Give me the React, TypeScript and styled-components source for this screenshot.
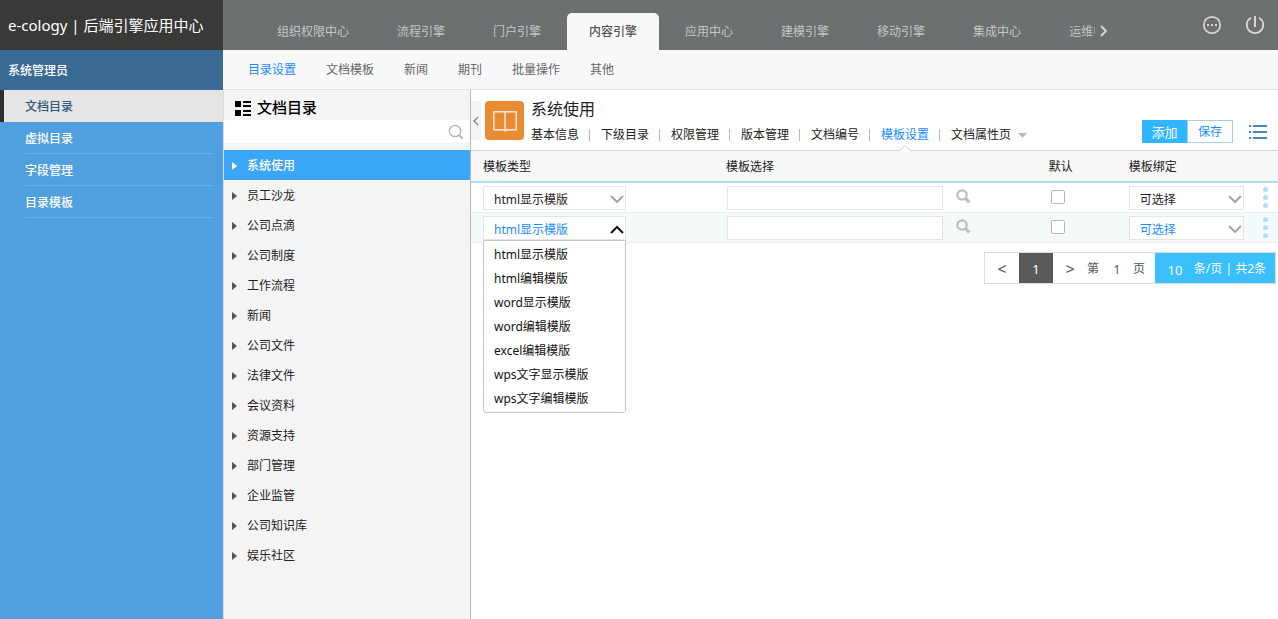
import React from 'react';
import styled, { createGlobalStyle, css } from 'styled-components';

const GlobalStyle = createGlobalStyle`
  * { box-sizing: border-box; }
  body {
    margin: 0;
    background: #fff;
    color: #222;
    font: 12px/18px "Noto Sans", "Noto Sans CJK SC", sans-serif;
  }
  ul { list-style: none; margin: 0; padding: 0; }
  a { color: inherit; text-decoration: none; }
  button, input, select { font: inherit; color: inherit; margin: 0; padding: 0; border-radius: 0; }
  button { border: 0; background: none; cursor: pointer; }
`;

/* ---------- frame ---------- */

const Page = styled.div`
  min-height: 100vh;
  display: flex;
  flex-direction: column;
`;

const TopBar = styled.header`
  display: flex;
  height: 50px;
  background: #6c7070;
`;

const Brand = styled.div`
  flex: 0 0 223px;
  padding-left: 8px;
  background: #393937;
  color: #fff;
  font-size: 15px;
  line-height: 50px;
  white-space: nowrap;
`;

const EngineNav = styled.nav`
  flex: 1 1 0;
  min-width: 0;
  display: flex;
  gap: 4px;
  padding: 13px 0 0 2px;
  margin-left: 30px;
  overflow: hidden;
`;

const EngineTab = styled.a<{ $active?: boolean }>`
  flex: none;
  padding: 0 22px;
  line-height: 37px;
  color: #c4c6c6;
  border-radius: 5px 5px 0 0;
  ${(p) => p.$active && css`
    background: #f8f8f8;
    color: #555;
    font-weight: 500;
  `}
`;

const TopTools = styled.div`
  flex: 0 0 183px;
  display: flex;
  align-items: center;
  padding-right: 13px;
  color: #d4d5d5;
`;

const ToolButton = styled.button<{ $push?: boolean }>`
  display: flex;
  padding: 0;
  margin-left: ${(p) => (p.$push ? 'auto' : '23px')};
`;

const MoreTabs = styled.button`
  display: flex;
  padding: 12px 0 0 5px;
`;

const Body = styled.div`
  flex: 1;
  display: flex;
`;

/* ---------- left menu ---------- */

const Sidebar = styled.aside`
  flex: 0 0 223px;
  background: #50a0df;
  color: #fff;
`;

const UserName = styled.div`
  height: 40px;
  padding: 1px 0 0 8px;
  background: #396a95;
  line-height: 40px;
  font-weight: 500;
`;

const MenuLink = styled.a<{ $active?: boolean }>`
  display: block;
  height: 32px;
  line-height: 33px;
  margin: 0 10px 0 25px;
  border-bottom: 1px solid #64afe9;
  font-weight: 500;
  ${(p) => p.$active && css`
    margin: 0;
    padding-left: 21px;
    border-bottom: 0;
    background: linear-gradient(to right, #2f2f2c 4px, #e5e5e5 4px);
    color: #30597f;
    padding-left: 25px;
  `}
`;

/* ---------- content frame ---------- */

const Content = styled.div`
  flex: 1;
  min-width: 0;
  display: flex;
  flex-direction: column;
`;

const SubNav = styled.nav`
  display: flex;
  gap: 30px;
  height: 40px;
  padding-left: 25px;
  border-bottom: 1px solid #e2e2e2;
  background: #f8f8f8;
  line-height: 40px;
`;

const SubLink = styled.a<{ $active?: boolean }>`
  color: ${(p) => (p.$active ? '#1a8cff' : '#666')};
`;

const Split = styled.div`
  flex: 1;
  display: flex;
`;

/* ---------- directory tree ---------- */

const TreePanel = styled.section`
  flex: 0 0 248px;
  border-left: 1px solid #dcdcdc;
  border-right: 1px solid #b9b9b9;
  background: #f4f4f4;
`;

const TreeTitle = styled.h2`
  display: flex;
  align-items: center;
  gap: 6px;
  height: 30px;
  margin: 0;
  padding: 4px 0 0 11px;
  color: #000;
  font-size: 15px;
  line-height: 20px;
  font-weight: 500;
  svg { margin-top: 4px; }
`;

const TreeSearch = styled.label`
  display: flex;
  align-items: center;
  height: 23px;
  margin-bottom: 7px;
  padding-right: 6px;
  background: #fff;
  input {
    flex: 1;
    min-width: 0;
    height: 23px;
    padding-left: 11px;
    border: 0;
    outline: 0;
    background: none;
  }
`;

const TreeItem = styled.button<{ $active?: boolean }>`
  display: flex;
  align-items: center;
  gap: 10px;
  width: 100%;
  height: 30px;
  padding: 2px 0 0 8px;
  color: ${(p) => (p.$active ? '#fff' : '#222')};
  background: ${(p) => (p.$active ? '#3ba5f7' : 'none')};
  font-weight: ${(p) => (p.$active ? 500 : 400)};
  svg { fill: ${(p) => (p.$active ? '#fff' : '#555')}; }
`;

/* ---------- main ---------- */

const Main = styled.main`
  flex: 1;
  min-width: 0;
`;

const MainHead = styled.div`
  display: flex;
  align-items: flex-start;
  height: 61px;
  padding: 11px 11px 0 0;
  border-bottom: 1px solid #d6d6d6;
`;

const Collapse = styled.button`
  display: flex;
  align-items: center;
  justify-content: center;
  width: 10px;
  height: 39px;
  margin-right: 4px;
  background: #f4f4f4;
`;

const BookBadge = styled.div`
  display: flex;
  align-items: center;
  justify-content: center;
  width: 39px;
  height: 39px;
  margin-right: 7px;
  border-radius: 4px;
  background: #e88b33;
`;

const HeadText = styled.div`
  flex: 1;
  min-width: 0;
`;

const MainTitle = styled.h1`
  margin: 0;
  color: #222;
  font-size: 16px;
  line-height: 16px;
  font-weight: 400;
`;

const DetailTabs = styled.nav`
  display: flex;
  padding-top: 9px;
  white-space: nowrap;
`;

const DetailTab = styled.a<{ $active?: boolean }>`
  position: relative;
  display: flex;
  align-items: center;
  height: 18px;
  color: ${(p) => (p.$active ? '#1a8cff' : '#222')};
  &:not(:first-child)::before {
    content: '';
    width: 1px;
    height: 12px;
    margin: 0 11px 0 10px;
    background: #b4b8c4;
  }
`;

const Notch = styled.svg`
  position: absolute;
  right: 18px;
  top: 19px;
`;

const Actions = styled.div`
  display: flex;
  align-items: center;
  padding-top: 19px;
`;

const ActionButton = styled.button<{ $primary?: boolean }>`
  width: ${(p) => (p.$primary ? '45px' : '46px')};
  height: 23px;
  border: 1px solid ${(p) => (p.$primary ? '#30b5ff' : '#a9cbee')};
  background: ${(p) => (p.$primary ? '#30b5ff' : '#fff')};
  color: ${(p) => (p.$primary ? '#fff' : '#1a8cff')};
  font-size: ${(p) => (p.$primary ? '13px' : '12px')};
  line-height: 22px;
`;

const ListButton = styled.button`
  display: flex;
  margin-left: 16px;
`;

/* ---------- table ---------- */

const Grid = styled.table`
  width: 100%;
  table-layout: fixed;
  border-collapse: separate;
  border-spacing: 0;
  th {
    height: 32px;
    padding: 2px 0 0 12px;
    border-bottom: 2px solid #b3dcfb;
    background: #f7f7f7;
    color: #222;
    font-weight: 400;
    text-align: left;
  }
  td {
    height: 30px;
    padding: 3px 0 2px 12px;
    border-bottom: 1px solid #eeefef;
    vertical-align: top;
  }
  td:last-child { padding-left: 0; }
  tbody tr:nth-child(even) td { background: #f3faf9; }
`;

const Picker = styled.div<{ $width: number; $on?: boolean }>`
  position: relative;
  width: ${(p) => p.$width}px;
  height: 24px;
  color: ${(p) => (p.$on ? '#1a8cff' : '#222')};
  select {
    display: block;
    width: 100%;
    height: 24px;
    padding: 4px 24px 0 10px;
    border: 1px solid #e6e6de;
    background: #fff;
    appearance: none;
    outline: 0;
  }
  > svg { position: absolute; right: 2px; top: 9px; pointer-events: none; }
`;

const Options = styled.ul`
  position: absolute;
  z-index: 2;
  top: 24px;
  left: 0;
  right: 0;
  padding: 2px 0 1px;
  border: 1px solid #c8c8c8;
  border-radius: 0 0 3px 3px;
  background: #fff;
  color: #111;
`;

const Option = styled.li`
  padding-left: 10px;
  line-height: 24px;
`;

const Browse = styled.div`
  display: flex;
  align-items: flex-start;
  gap: 13px;
  margin-left: 1px;
  input {
    width: 216px;
    height: 24px;
    padding: 0 6px;
    border: 1px solid #e6e6de;
    background: #fff;
    outline: 0;
  }
  button { padding-top: 3px; }
  svg { display: block; }
`;

const Tick = styled.input`
  display: block;
  width: 14px;
  height: 14px;
  margin: 4px 0 0 2px;
  border: 1px solid #b6b6b6;
  border-radius: 2px;
  background: #fff;
  appearance: none;
`;

const RowMenu = styled.button`
  display: block;
  margin: 1px 0 0 7px;
  svg { display: block; }
`;

/* ---------- pager ---------- */

const Pager = styled.nav`
  display: flex;
  width: max-content;
  height: 32px;
  margin: 9px 2px 0 auto;
  border: 1px solid #dcdcdc;
  color: #555;
  line-height: 32px;
`;

const PageButton = styled.button<{ $current?: boolean }>`
  width: 34px;
  font-size: ${(p) => (p.$current ? '13px' : '16px')};
  background: ${(p) => (p.$current ? '#5a5a5a' : '#fff')};
  color: ${(p) => (p.$current ? '#fff' : '#555')};
`;

const PageJump = styled.label`
  display: flex;
  width: 68px;
  input {
    width: 34px;
    height: 30px;
    padding: 4px 0 0 2px;
    border: 0;
    background: none;
    text-align: center;
    outline: 0;
  }
`;

const PageSize = styled.label`
  display: flex;
  width: 120px;
  padding-right: 9px;
  justify-content: space-between;
  background: #3bbfff;
  color: #fff;
  white-space: nowrap;
  input {
    width: 30px;
    height: 30px;
    margin-left: 5px;
    padding-top: 4px;
    border: 0;
    background: none;
    font-size: 13px;
    text-align: center;
    outline: 0;
  }
`;

/* ---------- data ---------- */

const engines = ['组织权限中心', '流程引擎', '门户引擎', '内容引擎', '应用中心', '建模引擎', '移动引擎', '集成中心', '运维中心'];
const menu = ['文档目录', '虚拟目录', '字段管理', '目录模板'];
const subNav = ['目录设置', '文档模板', '新闻', '期刊', '批量操作', '其他'];
const folders = ['系统使用', '员工沙龙', '公司点滴', '公司制度', '工作流程', '新闻', '公司文件', '法律文件', '会议资料', '资源支持', '部门管理', '企业监管', '公司知识库', '娱乐社区'];
const details = ['基本信息', '下级目录', '权限管理', '版本管理', '文档编号', '模板设置', '文档属性页'];
const templates = ['html显示模版', 'html编辑模版', 'word显示模版', 'word编辑模版', 'excel编辑模版', 'wps文字显示模版', 'wps文字编辑模版'];

const Chevron = ({ up }: { up?: boolean }) => (
  <svg width="14" height="9" viewBox="0 0 14 9" fill="none" stroke={up ? '#111' : '#a6a6a6'} strokeWidth="2">
    <path d={up ? 'M1 8 7 2l6 6' : 'M1 1l6 6 6-6'} />
  </svg>
);

function TemplateRow({ open }: { open?: boolean }) {
  return (
    <tr>
      <td>
        <Picker $width={143} $on={open}>
          <select aria-label="模板类型">
            {templates.map((t) => <option key={t}>{t}</option>)}
          </select>
          <Chevron up={open} />
          {open && (
            <Options role="listbox">
              {templates.map((t, i) => <Option key={t} role="option" aria-selected={i === 0}>{t}</Option>)}
            </Options>
          )}
        </Picker>
      </td>
      <td>
        <Browse>
          <input type="text" aria-label="模板选择" />
          <button type="button" aria-label="浏览">
            <svg width="15" height="15" viewBox="0 0 15 15" fill="none" stroke="#bdbdbd">
              <circle cx="6" cy="6" r="4.7" strokeWidth="2.2" />
              <path d="M9.8 9.8l3.6 3.6" strokeWidth="3.2" />
            </svg>
          </button>
        </Browse>
      </td>
      <td><Tick type="checkbox" aria-label="默认" /></td>
      <td>
        <Picker $width={115} $on={open}>
          <select aria-label="模板绑定"><option>可选择</option></select>
          <Chevron />
        </Picker>
      </td>
      <td>
        <RowMenu type="button" aria-label="行操作">
          <svg width="5" height="21" viewBox="0 0 5 21" fill="#b3dffc">
            <circle cx="2.5" cy="2.5" r="2.5" />
            <circle cx="2.5" cy="10.5" r="2.5" />
            <circle cx="2.5" cy="18.5" r="2.5" />
          </svg>
        </RowMenu>
      </td>
    </tr>
  );
}

export default function App() {
  return (
    <Page>
      <GlobalStyle />
      <TopBar>
        <Brand>e-cology | 后端引擎应用中心</Brand>
        <EngineNav>
          {engines.map((e) => <EngineTab key={e} href="#" $active={e === '内容引擎'}>{e}</EngineTab>)}
        </EngineNav>
        <TopTools>
          <MoreTabs type="button" aria-label="更多">
            <svg width="8" height="12" viewBox="0 0 8 12" fill="none" stroke="currentColor" strokeWidth="2">
              <path d="M1 1l5 5-5 5" />
            </svg>
          </MoreTabs>
          <ToolButton type="button" $push aria-label="消息">
            <svg width="20" height="20" viewBox="0 0 20 20" fill="none" stroke="currentColor" strokeWidth="1.8">
              <circle cx="10" cy="10" r="8.2" />
              <path d="M5 10h2M9 10h2M13 10h2" strokeWidth="2" />
            </svg>
          </ToolButton>
          <ToolButton type="button" aria-label="退出">
            <svg width="20" height="20" viewBox="0 0 20 20" fill="none" stroke="currentColor" strokeWidth="1.8">
              <path d="M6 2.800a8.200 8.200 0 1 0 8 0" />
              <path d="M10 1v11" strokeWidth="2" />
            </svg>
          </ToolButton>
        </TopTools>
      </TopBar>
      <Body>
        <Sidebar>
          <UserName>系统管理员</UserName>
          <nav>
            {menu.map((m, i) => <MenuLink key={m} href="#" $active={i === 0}>{m}</MenuLink>)}
          </nav>
        </Sidebar>
        <Content>
          <SubNav>
            {subNav.map((s, i) => <SubLink key={s} href="#" $active={i === 0}>{s}</SubLink>)}
          </SubNav>
          <Split>
            <TreePanel>
              <TreeTitle>
                <svg width="16" height="16" viewBox="0 0 16 16" fill="#000">
                  <path d="M0 0h6v6H0zM0 9h6v6H0zM8 0h8v2H8zM8 4h8v2H8zM8 9h8v2H8zM8 13h8v2H8z" />
                </svg>
                文档目录
              </TreeTitle>
              <TreeSearch>
                <input type="text" aria-label="搜索目录" />
                <svg width="16" height="16" viewBox="0 0 16 16" fill="none" stroke="#b3b3b3">
                  <circle cx="7" cy="7" r="5.7" strokeWidth="1.3" />
                  <path d="M11.4 11.4l3.2 3.2" strokeWidth="2" />
                </svg>
              </TreeSearch>
              <ul>
                {folders.map((f, i) => (
                  <li key={f}>
                    <TreeItem type="button" $active={i === 0}>
                      <svg width="5" height="8" viewBox="0 0 5 8"><path d="M0 0l5 4-5 4z" /></svg>
                      {f}
                    </TreeItem>
                  </li>
                ))}
              </ul>
            </TreePanel>
            <Main>
              <MainHead>
                <Collapse type="button" aria-label="收起">
                  <svg width="6" height="10" viewBox="0 0 6 10" fill="none" stroke="#777" strokeWidth="1.2">
                    <path d="M5.2 .8 1 5l4.2 4.2" />
                  </svg>
                </Collapse>
                <BookBadge>
                  <svg width="24" height="22" viewBox="0 0 24 22" fill="none" stroke="#fdebd8" strokeWidth="1.5">
                    <path d="M.8 1.8h22.4v18H14l-2 1.200-2-1.200H.8zM12 1.800v18" />
                  </svg>
                </BookBadge>
                <HeadText>
                  <MainTitle>系统使用</MainTitle>
                  <DetailTabs>
                    {details.map((d) => (
                      <DetailTab key={d} href="#" $active={d === '模板设置'}>
                        {d}
                        {d === '模板设置' && (
                          <Notch width="12" height="7" viewBox="0 0 12 7">
                            <path d="M0 6.5 6 .7l6 5.800V7H0z" fill="#fff" />
                            <path d="M0 6.2 6 .7l6 5.500" fill="none" stroke="#d0d0d0" />
                          </Notch>
                        )}
                        {d === '文档属性页' && (
                          <svg width="16" height="5" viewBox="0 0 16 5"><path d="M7 0h9l-4.500 5z" fill="#bbb" /></svg>
                        )}
                      </DetailTab>
                    ))}
                  </DetailTabs>
                </HeadText>
                <Actions>
                  <ActionButton type="button" $primary>添加</ActionButton>
                  <ActionButton type="button">保存</ActionButton>
                  <ListButton type="button" aria-label="列表">
                    <svg width="18" height="14" viewBox="0 0 18 14" fill="#4a82c3">
                      <path d="M0 0h2v2H0zM4 0h14v2H4zM0 6h2v2H0zM4 6h14v2H4zM0 12h2v2H0zM4 12h14v2H4z" />
                    </svg>
                  </ListButton>
                </Actions>
              </MainHead>
              <Grid>
                <colgroup>
                  <col style={{ width: '243px' }} />
                  <col style={{ width: '40%' }} />
                  <col style={{ width: '80px' }} />
                  <col />
                  <col style={{ width: '22px' }} />
                </colgroup>
                <thead>
                  <tr>
                    <th>模板类型</th>
                    <th>模板选择</th>
                    <th>默认</th>
                    <th>模板绑定</th>
                    <th aria-label="操作" />
                  </tr>
                </thead>
                <tbody>
                  <TemplateRow />
                  <TemplateRow open />
                </tbody>
              </Grid>
              <Pager>
                <PageButton type="button">&lt;</PageButton>
                <PageButton type="button" $current>1</PageButton>
                <PageButton type="button">&gt;</PageButton>
                <PageJump>第<input type="text" defaultValue="1" />页</PageJump>
                <PageSize><input type="text" defaultValue="10" />条/页 | 共2条</PageSize>
              </Pager>
            </Main>
          </Split>
        </Content>
      </Body>
    </Page>
  );
}
